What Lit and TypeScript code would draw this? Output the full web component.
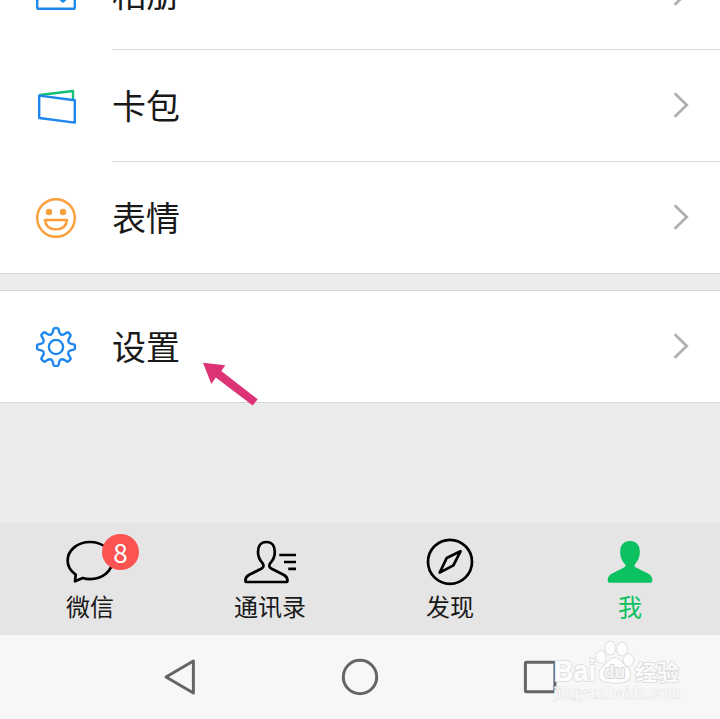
import { LitElement, html, css, svg } from "lit";
import { customElement } from "lit/decorators.js";

// Outline of an eight-toothed cog centred on the origin.
function cogPath(): string {
  const parts: string[] = [];
  for (let i = 0; i < 8; i++) {
    const a = (i * Math.PI) / 4;
    const at = (angle: number, r: number, t: number) =>
      `${(r * Math.cos(angle) - t * Math.sin(angle)).toFixed(2)} ${(r * Math.sin(angle) + t * Math.cos(angle)).toFixed(2)}`;
    const p = (r: number, t: number) => at(a, r, t);
    const n = (r: number, t: number) => at(a + Math.PI / 4, r, t);
    const v = at(a + Math.PI / 8, 11.4, 0);
    if (i === 0) parts.push(`M${p(15.4, -3.1)}`);
    parts.push(`L${p(17.8, -2.6)}Q${p(18.9, -2.3)} ${p(18.9, -1.4)}L${p(18.9, 1.4)}Q${p(18.9, 2.3)} ${p(17.8, 2.6)}`);
    parts.push(`L${p(15.4, 3.1)}Q${v} ${n(15.4, -3.1)}`);
  }
  return parts.join("") + "Z";
}

const icons = {
  album: svg`<g stroke="#1e87ee"><rect x="-18.8" y="-19" width="37.6" height="33.8" rx="1"/><path d="M-19 6L-14 2.5M3 4L7 7.5L11 4"/></g>`,
  cards: svg`<path stroke="#10c074" d="M-16-11L17-15V-6.4"/><path stroke="#1e87ee" d="M-16.8-10.4L18.8-5.8V16.6L-16.8 12Z"/>`,
  smile: svg`<g stroke="#fb9f3c"><circle r="18.8"/><path d="M-11 2H11Q10 11.4 0 11.4T-11 2Z"/></g><g fill="#fb9f3c"><circle cx="-7" cy="-6" r="3.2"/><circle cx="7" cy="-6" r="3.2"/></g>`,
  cog: svg`<g stroke="#1e87ee"><path d=${cogPath()}/><circle r="7.1"/></g>`,
};

const tabs = [
  {
    label: "微信", badge: 8, active: false,
    icon: svg`<path d="M-14.3 12.6C-19.5 9-22.4 4.2-22.4-1.4C-22.4-11.8-12.4-20 0-20S22.4-11.8 22.4-1.4S12.4 17.2 0 17.2Q-3.8 17.2-7.2 16L-15 19.3Z"/>`,
  },
  {
    label: "通讯录", badge: 0, active: false,
    icon: svg`<path d="M-3.6-20C-9.5-20-12-15.5-12-10.2C-12-4-9.6-1-7.4 1.2Q-5.3 4.5-8.3 6.5L-21.2 13Q-24.6 15-24.6 18.5Q-24.6 20-23 20H15.9Q17.5 20 17.5 18.5Q17.5 15 14 13L1.2 6.5Q-2 4.5.2 1.2C2.4-1 4.8-4 4.8-10.2C4.8-15.5 2.3-20-3.6-20Z"/><path d="M9.3-7H26M14 0H26M18.3 6.8H26"/>`,
  },
  {
    label: "发现", badge: 0, active: false,
    icon: svg`<circle cy="-.2" r="22"/><path d="M10.5-10.7L-3.3-4L-10.3 10.6L3.4 3.4Z"/>`,
  },
  {
    label: "我", badge: 0, active: true,
    icon: svg`<path fill="#0cc160" stroke="none" d="M0-21C-6.5-21-9.8-16.5-9.8-10.5C-9.8-4.5-7.7-.5-5.1 2Q-3.5 4.2-6 5.6L-18 11.5Q-22.3 14-22.3 18V19Q-22.3 20.8-20.5 20.8H20.5Q22.3 20.8 22.3 19V18Q22.3 14 18 11.5L6 5.6Q3.5 4.2 5.1 2C7.7-.5 9.8-4.5 9.8-10.5C9.8-16.5 6.5-21 0-21Z"/>`,
  },
];

@customElement("app-root")
export class AppRoot extends LitElement {
  static styles = css`
    :host {
      display: flex;
      flex-direction: column;
      height: 719px;
      overflow: hidden;
      background: #ececec;
      color: #191919;
      font-family: "Noto Sans CJK SC", sans-serif;
    }
    svg { display: block; fill: none; overflow: visible; }
    .group { flex: none; background: #fff; border-bottom: 1px solid #d6d6d6; }
    .first { height: 273px; display: flex; flex-direction: column; justify-content: flex-end; }
    .second { margin-top: 16px; border-top: 1px solid #d6d6d6; }
    .row { position: relative; flex: none; display: flex; align-items: center; height: 111px; padding-left: 32px; }
    .ruled { height: 112px; }
    .glyph { width: 48px; height: 48px; flex: none; stroke-width: 2.4; stroke-linejoin: round; stroke-linecap: round; }
    .body { box-sizing: border-box; flex: 1; display: flex; align-items: center; justify-content: space-between; height: 100%; margin-left: 32px; padding: 0 31px 2px 0; }
    .ruled .body { border-bottom: 1px solid #d9d9d9; }
    .label { font-size: 34px; line-height: 50px; }
    .chevron { width: 16px; height: 28px; stroke: #b0b0b0; stroke-width: 2.8; }
    .arrow { position: absolute; left: 200px; top: 69px; width: 60px; height: 48px; fill: #dc3376; z-index: 1; }
    .tabs { display: grid; grid-template-columns: repeat(4, 1fr); height: 112px; margin-top: auto; background: #e5e5e5; flex: none; }
    .tab { display: flex; flex-direction: column; align-items: center; padding-top: 13px; }
    .pic { position: relative; }
    .tabicon { width: 64px; height: 52px; stroke: #000; stroke-width: 2.7; stroke-linejoin: round; }
    .name { font-size: 24px; line-height: 36px; }
    .active { color: #0cc160; }
    .badge {
      position: absolute; left: 44px; top: -2px; width: 37px; height: 36px; border-radius: 50%;
      background: #fa5351; color: #fff; font: 26px/35px "Noto Sans CJK SC", sans-serif; text-align: center;
    }
    .nav { position: relative; display: grid; grid-template-columns: repeat(3, 180px); justify-content: center; height: 84px; background: #f7f7f7; flex: none; }
    .key { width: 44px; height: 44px; margin: 20px auto 0; stroke: #656565; stroke-width: 3; stroke-linejoin: round; }
    .mark { position: absolute; left: 545px; top: 0; width: 145px; height: 76px; }
    .ink { fill: #fdfdfd; stroke: #dfdfdf; stroke-width: 2; paint-order: stroke; stroke-linejoin: round; }
    .latin { font-family: "Liberation Sans", sans-serif; font-weight: 700; }
    .du { fill: #f7f7f7; stroke: #d6d6d6; }
    .han { font-family: "Noto Sans CJK SC", sans-serif; font-weight: 500; }
    .url { font-family: "Liberation Sans", sans-serif; stroke: #e4e4e4; stroke-width: 1.3; }
  `;

  row(label: string, icon: unknown, ruled = false, extra: unknown = null) {
    return html`<div class="row ${ruled ? "ruled" : ""}">
      <svg class="glyph" viewBox="-24 -24 48 48">${icon}</svg>
      <div class="body">
        <span class="label">${label}</span>
        <svg class="chevron" viewBox="0 0 16 28"><path d="M1.7 2.2L13.7 14L1.7 25.8"/></svg>
      </div>
      ${extra}
    </div>`;
  }

  render() {
    return html`
      <div class="group first">
        ${this.row("相册", icons.album, true)}
        ${this.row("卡包", icons.cards, true)}
        ${this.row("表情", icons.smile)}
      </div>
      <div class="group second">
        ${this.row("设置", icons.cog, false, html`<svg class="arrow" viewBox="0 0 60 48"><path d="M3 2.7L25.3 5.3L21.3 11L57.7 39.2L52.7 45.5L15.8 17.6L11.3 24Z"/></svg>`)}
      </div>
      <div class="tabs">
        ${tabs.map((t) => html`<div class="tab">
          <div class="pic">
            <svg class="tabicon" viewBox="-32 -26 64 52">${t.icon}</svg>
            ${t.badge ? html`<span class="badge">${t.badge}</span>` : null}
          </div>
          <span class="name ${t.active ? "active" : ""}">${t.label}</span>
        </div>`)}
      </div>
      <div class="nav">
        <svg class="key" viewBox="-22 -22 44 44"><path d="M13.4-16V16L-14 0Z"/></svg>
        <svg class="key" viewBox="-22 -22 44 44"><circle r="16.7"/></svg>
        <svg class="key" viewBox="-22 -22 44 44"><rect x="-14.6" y="-14.7" width="29.5" height="29.5" rx="1"/></svg>
        <svg class="mark" viewBox="545 635 145 76">
          <g class="ink">
            <text class="latin" x="554" y="681" font-size="29" textLength="42" lengthAdjust="spacingAndGlyphs">Bai</text>
            <ellipse cx="601" cy="657" rx="4.8" ry="6"/>
            <ellipse cx="610.2" cy="648" rx="5" ry="6.4"/>
            <ellipse cx="622" cy="649" rx="5" ry="6.4"/>
            <ellipse cx="628.5" cy="660" rx="4.8" ry="6"/>
            <path d="M615 658C620 658 622 663 626 667C632 671 632 681 623 682C619 683 611 683 607 682C598 681 597 672 603 667C608 663 610 658 615 658Z"/>
            <text class="latin du" x="604" y="678" font-size="18" textLength="21" lengthAdjust="spacingAndGlyphs">du</text>
            <text class="han" x="635" y="679.5" font-size="22" textLength="44">经验</text>
            <text class="url" x="554" y="698" font-size="14.5" textLength="126">jingyan.baidu.com</text>
          </g>
        </svg>
      </div>
    `;
  }
}
